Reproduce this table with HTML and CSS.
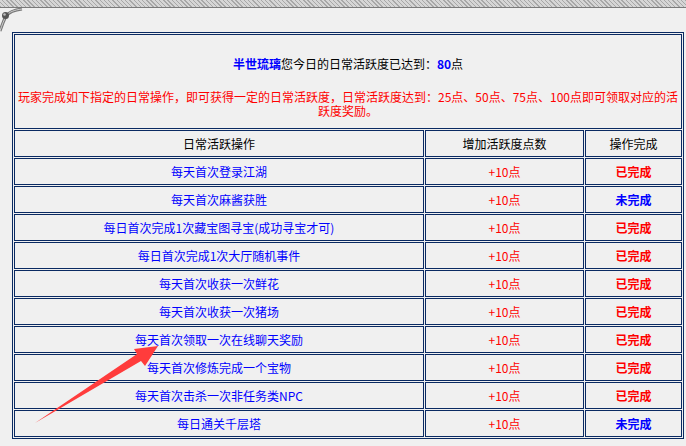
FILE: index.html
```html
<!DOCTYPE html>
<html lang="zh-CN">
<head>
<meta charset="utf-8">
<title>日常活跃度</title>
<link rel="stylesheet" href="styles.css">
</head>
<body>
<div class="topbar"></div>
<svg class="ornament" width="24" height="34" viewBox="0 0 24 34" aria-hidden="true">
  <path d="M22 3 C14 4 9 6 6 10 C4 14 2 19 0 25" fill="none" stroke="#777" stroke-width="3"/>
  <path d="M22 3 C14 4 9 6 6 10 C4 14 2 19 0 25" fill="none" stroke="#cfcfcf" stroke-width="1"/>
  <circle cx="5.5" cy="9.5" r="3.5" fill="#555"/>
  <circle cx="4.5" cy="8.5" r="1.3" fill="#bdbdbd"/>
</svg>
<div class="wrap">
  <table class="grid">
    <colgroup>
      <col class="c1"><col class="c2"><col class="c3">
    </colgroup>
    <tr>
      <td colspan="3" class="intro">
        <div class="intro-box">
          <p class="title"><b class="blue">半世琉璃</b>您今日的日常活跃度已达到：<b class="blue">80</b>点</p>
          <p class="rule">玩家完成如下指定的日常操作，即可获得一定的日常活跃度，日常活跃度达到：25点、50点、75点、100点即可领取对应的活跃度奖励。</p>
        </div>
      </td>
    </tr>
    <tr class="head">
      <td>日常活跃操作</td><td>增加活跃度点数</td><td>操作完成</td>
    </tr>
    <tr><td class="task">每天首次登录江湖</td><td class="pts">+10点</td><td class="done">已完成</td></tr>
    <tr><td class="task">每天首次麻酱获胜</td><td class="pts">+10点</td><td class="todo">未完成</td></tr>
    <tr><td class="task">每日首次完成1次藏宝图寻宝(成功寻宝才可)</td><td class="pts">+10点</td><td class="done">已完成</td></tr>
    <tr><td class="task">每日首次完成1次大厅随机事件</td><td class="pts">+10点</td><td class="done">已完成</td></tr>
    <tr><td class="task">每天首次收获一次鲜花</td><td class="pts">+10点</td><td class="done">已完成</td></tr>
    <tr><td class="task">每天首次收获一次猪场</td><td class="pts">+10点</td><td class="done">已完成</td></tr>
    <tr><td class="task">每天首次领取一次在线聊天奖励</td><td class="pts">+10点</td><td class="done">已完成</td></tr>
    <tr><td class="task">每天首次修炼完成一个宝物</td><td class="pts">+10点</td><td class="done">已完成</td></tr>
    <tr><td class="task">每天首次击杀一次非任务类NPC</td><td class="pts">+10点</td><td class="done">已完成</td></tr>
    <tr><td class="task">每日通关千层塔</td><td class="pts">+10点</td><td class="todo">未完成</td></tr>
  </table>
</div>
<svg class="arrow" width="686" height="446" viewBox="0 0 686 446" aria-hidden="true">
  <polygon points="35,423 137,354 134,349 158,346 145,366 141,361" fill="#ff3c3c"/>
</svg>
</body>
</html>
```

FILE: styles.css
```css
html, body {
  margin: 0;
  padding: 0;
  background: #f0f0f0;
  font-family: "Noto Sans CJK SC", "Liberation Sans", sans-serif;
  font-size: 12px;
  color: #000;
}

.topbar {
  height: 8px;
  background:
    repeating-linear-gradient(45deg, #a8a8a8 0 1px, #d6d6d6 1px 3px),
    #c8c8c8;
  border-bottom: 1px solid #7a7a7a;
  box-sizing: border-box;
}

.ornament {
  position: absolute;
  left: 0;
  top: 6px;
}

.wrap {
  padding: 24px 0 0 12px;
}

.grid {
  width: 672px;
  table-layout: fixed;
  border-collapse: separate;
  border-spacing: 1px;
  border: 1px solid #0a2a62;
}

.c1 { width: 410px; }
.c2 { width: 159px; }
.c3 { width: 97px; }

.grid td {
  border: 1px solid #0a2a62;
  padding: 0;
  height: 25px;
  text-align: center;
  vertical-align: middle;
  line-height: 14px;
}

.grid td.intro {
  height: 93px;
  vertical-align: top;
}

.intro-box {
  padding: 22px 0 0;
}

.intro-box p {
  margin: 0;
  line-height: 14px;
}

.title {
  margin-bottom: 19px !important;
}

.rule {
  color: #ff0000;
}

.blue {
  color: #0000ff;
}

.task {
  color: #0000ff;
}

.pts {
  color: #ff0000;
}

.done {
  color: #ff0000;
  font-weight: bold;
}

.todo {
  color: #0000ff;
  font-weight: bold;
}

.arrow {
  position: absolute;
  left: 0;
  top: 0;
  pointer-events: none;
}
```
